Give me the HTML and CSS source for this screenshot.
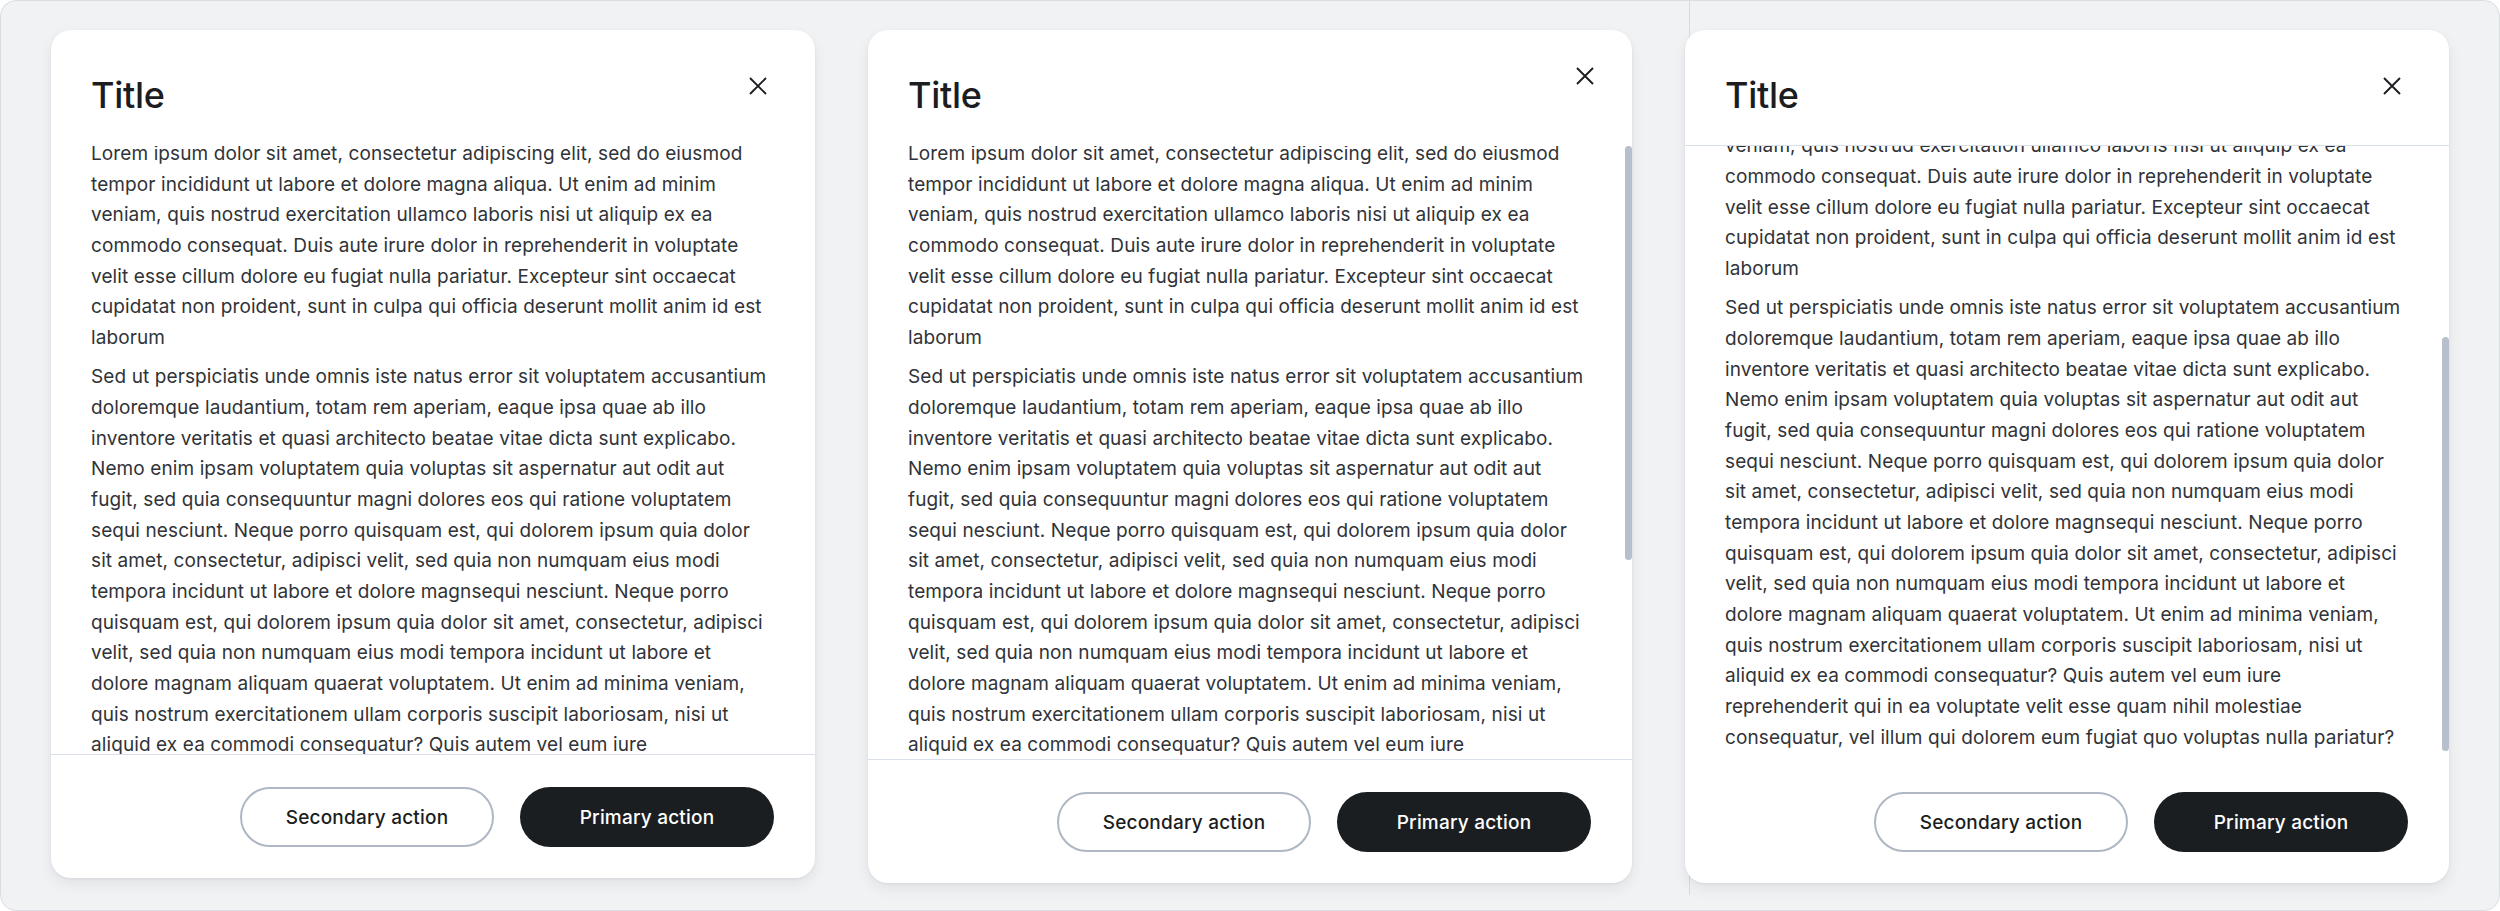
FILE: index.html
```html
<!DOCTYPE html>
<html lang="en">
<head>
<meta charset="utf-8">
<title>Dialogs</title>
<link rel="stylesheet" href="styles.css">
</head>
<body>
<main class="page">

  <div class="col col--first">
    <section class="dialog dialog--short">
      <header class="dialog__header">
        <h2 class="dialog__title">Title</h2>
        <button class="dialog__close" aria-label="Close">
          <svg viewBox="0 0 18 18" width="18" height="18"><path d="M1 1L17 17M17 1L1 17"/></svg>
        </button>
      </header>
      <div class="dialog__body">
        <div class="dialog__content">
          <p>Lorem ipsum dolor sit amet, consectetur adipiscing elit, sed do eiusmod<br>tempor incididunt ut labore et dolore magna aliqua. Ut enim ad minim<br>veniam, quis nostrud exercitation ullamco laboris nisi ut aliquip ex ea<br>commodo consequat. Duis aute irure dolor in reprehenderit in voluptate<br>velit esse cillum dolore eu fugiat nulla pariatur. Excepteur sint occaecat<br>cupidatat non proident, sunt in culpa qui officia deserunt mollit anim id est<br>laborum</p>
          <p>Sed ut perspiciatis unde omnis iste natus error sit voluptatem accusantium<br>doloremque laudantium, totam rem aperiam, eaque ipsa quae ab illo<br>inventore veritatis et quasi architecto beatae vitae dicta sunt explicabo.<br>Nemo enim ipsam voluptatem quia voluptas sit aspernatur aut odit aut<br>fugit, sed quia consequuntur magni dolores eos qui ratione voluptatem<br>sequi nesciunt. Neque porro quisquam est, qui dolorem ipsum quia dolor<br>sit amet, consectetur, adipisci velit, sed quia non numquam eius modi<br>tempora incidunt ut labore et dolore magnsequi nesciunt. Neque porro<br>quisquam est, qui dolorem ipsum quia dolor sit amet, consectetur, adipisci<br>velit, sed quia non numquam eius modi tempora incidunt ut labore et<br>dolore magnam aliquam quaerat voluptatem. Ut enim ad minima veniam,<br>quis nostrum exercitationem ullam corporis suscipit laboriosam, nisi ut<br>aliquid ex ea commodi consequatur? Quis autem vel eum iure<br>reprehenderit qui in ea voluptate velit esse quam nihil molestiae<br>consequatur, vel illum qui dolorem eum fugiat quo voluptas nulla pariatur?</p>
        </div>
      </div>
      <footer class="dialog__footer">
        <button class="btn btn--secondary">Secondary action</button>
        <button class="btn btn--primary">Primary action</button>
      </footer>
    </section>
  </div>

  <div class="col col--second">
    <section class="dialog dialog--top">
      <header class="dialog__header">
        <h2 class="dialog__title">Title</h2>
        <button class="dialog__close dialog__close--corner" aria-label="Close">
          <svg viewBox="0 0 18 18" width="18" height="18"><path d="M1 1L17 17M17 1L1 17"/></svg>
        </button>
      </header>
      <div class="dialog__body">
        <div class="dialog__content">
          <p>Lorem ipsum dolor sit amet, consectetur adipiscing elit, sed do eiusmod<br>tempor incididunt ut labore et dolore magna aliqua. Ut enim ad minim<br>veniam, quis nostrud exercitation ullamco laboris nisi ut aliquip ex ea<br>commodo consequat. Duis aute irure dolor in reprehenderit in voluptate<br>velit esse cillum dolore eu fugiat nulla pariatur. Excepteur sint occaecat<br>cupidatat non proident, sunt in culpa qui officia deserunt mollit anim id est<br>laborum</p>
          <p>Sed ut perspiciatis unde omnis iste natus error sit voluptatem accusantium<br>doloremque laudantium, totam rem aperiam, eaque ipsa quae ab illo<br>inventore veritatis et quasi architecto beatae vitae dicta sunt explicabo.<br>Nemo enim ipsam voluptatem quia voluptas sit aspernatur aut odit aut<br>fugit, sed quia consequuntur magni dolores eos qui ratione voluptatem<br>sequi nesciunt. Neque porro quisquam est, qui dolorem ipsum quia dolor<br>sit amet, consectetur, adipisci velit, sed quia non numquam eius modi<br>tempora incidunt ut labore et dolore magnsequi nesciunt. Neque porro<br>quisquam est, qui dolorem ipsum quia dolor sit amet, consectetur, adipisci<br>velit, sed quia non numquam eius modi tempora incidunt ut labore et<br>dolore magnam aliquam quaerat voluptatem. Ut enim ad minima veniam,<br>quis nostrum exercitationem ullam corporis suscipit laboriosam, nisi ut<br>aliquid ex ea commodi consequatur? Quis autem vel eum iure<br>reprehenderit qui in ea voluptate velit esse quam nihil molestiae<br>consequatur, vel illum qui dolorem eum fugiat quo voluptas nulla pariatur?</p>
        </div>
        <span class="dialog__thumb dialog__thumb--top"></span>
      </div>
      <footer class="dialog__footer">
        <button class="btn btn--secondary">Secondary action</button>
        <button class="btn btn--primary">Primary action</button>
      </footer>
    </section>
  </div>

  <div class="col col--third">
    <section class="dialog dialog--bottom">
      <header class="dialog__header">
        <h2 class="dialog__title">Title</h2>
        <button class="dialog__close" aria-label="Close">
          <svg viewBox="0 0 18 18" width="18" height="18"><path d="M1 1L17 17M17 1L1 17"/></svg>
        </button>
      </header>
      <div class="dialog__body">
        <div class="dialog__content">
          <p>Lorem ipsum dolor sit amet, consectetur adipiscing elit, sed do eiusmod<br>tempor incididunt ut labore et dolore magna aliqua. Ut enim ad minim<br>veniam, quis nostrud exercitation ullamco laboris nisi ut aliquip ex ea<br>commodo consequat. Duis aute irure dolor in reprehenderit in voluptate<br>velit esse cillum dolore eu fugiat nulla pariatur. Excepteur sint occaecat<br>cupidatat non proident, sunt in culpa qui officia deserunt mollit anim id est<br>laborum</p>
          <p>Sed ut perspiciatis unde omnis iste natus error sit voluptatem accusantium<br>doloremque laudantium, totam rem aperiam, eaque ipsa quae ab illo<br>inventore veritatis et quasi architecto beatae vitae dicta sunt explicabo.<br>Nemo enim ipsam voluptatem quia voluptas sit aspernatur aut odit aut<br>fugit, sed quia consequuntur magni dolores eos qui ratione voluptatem<br>sequi nesciunt. Neque porro quisquam est, qui dolorem ipsum quia dolor<br>sit amet, consectetur, adipisci velit, sed quia non numquam eius modi<br>tempora incidunt ut labore et dolore magnsequi nesciunt. Neque porro<br>quisquam est, qui dolorem ipsum quia dolor sit amet, consectetur, adipisci<br>velit, sed quia non numquam eius modi tempora incidunt ut labore et<br>dolore magnam aliquam quaerat voluptatem. Ut enim ad minima veniam,<br>quis nostrum exercitationem ullam corporis suscipit laboriosam, nisi ut<br>aliquid ex ea commodi consequatur? Quis autem vel eum iure<br>reprehenderit qui in ea voluptate velit esse quam nihil molestiae<br>consequatur, vel illum qui dolorem eum fugiat quo voluptas nulla pariatur?</p>
        </div>
        <span class="dialog__thumb dialog__thumb--bottom"></span>
      </div>
      <footer class="dialog__footer">
        <button class="btn btn--secondary">Secondary action</button>
        <button class="btn btn--primary">Primary action</button>
      </footer>
    </section>
  </div>

</main>
</body>
</html>
```

FILE: styles.css
```css
* { box-sizing: border-box; }

html, body {
  margin: 0;
  padding: 0;
  background: #ffffff;
}

body {
  font-family: "Inter", "Liberation Sans", sans-serif;
  color: #1b1d21;
}

.page {
  width: 2500px;
  height: 911px;
  display: flex;
  align-items: flex-start;
  background: #f1f2f4;
  border: 1px solid #dadde2;
  border-radius: 16px;
  overflow: hidden;
}

.col--first { padding: 29px 0 0 50px; }
.col--second { padding: 29px 0 0 53px; }
.col--third {
  margin-left: 57px;
  height: 894px;
  padding-top: 29px;
  border-left: 1px solid #d5dce5;
}
.col--third .dialog { margin-left: -5px; }

.dialog {
  width: 764px;
  background: #ffffff;
  border-radius: 20px;
  box-shadow: 0 6px 14px rgba(20, 28, 40, 0.07), 0 1px 3px rgba(20, 28, 40, 0.06);
  display: flex;
  flex-direction: column;
  overflow: hidden;
}

.dialog__header {
  height: 116px;
  display: flex;
  align-items: flex-start;
  padding: 47px 48px 0 40px;
  border-bottom: 1px solid transparent;
}

.dialog__title {
  flex: 1;
  margin: 0;
  font-size: 36px;
  line-height: 36px;
  font-weight: 500;
  letter-spacing: -0.3px;
  color: #1b1d21;
}

.dialog__close {
  width: 18px;
  height: 18px;
  padding: 0;
  border: 0;
  background: none;
  display: flex;
}
.dialog__close svg {
  fill: none;
  stroke: #1b1d21;
  stroke-width: 1.9;
}
.dialog__close--corner {
  margin-top: -10px;
  margin-right: -10px;
}

.dialog__body {
  position: relative;
  overflow: hidden;
  height: 608px;
}

.dialog__content {
  padding: 0 40px;
  margin-top: -7px;
  font-size: 19px;
  line-height: 30.67px;
  letter-spacing: 0.1px;
  color: #303338;
  white-space: nowrap;
}
.dialog__content p { margin: 0 0 8.67px; }

.dialog__thumb {
  position: absolute;
  right: 0;
  width: 7px;
  height: 414px;
  border-radius: 4px;
  background: #b6bfcb;
}
.dialog__thumb--top { top: 0; }
.dialog__thumb--bottom { top: 191px; }

.dialog__footer {
  display: flex;
  justify-content: flex-end;
  gap: 26px;
  padding: 32px 41px 31px;
  border-top: 1px solid #d9e0e9;
}

.dialog--top .dialog__body,
.dialog--bottom .dialog__body { height: 613px; }

.dialog--bottom .dialog__header { border-bottom-color: #d9e0e9; }
.dialog--bottom .dialog__content { margin-top: -76px; }
.dialog--bottom .dialog__footer { border-top-color: transparent; }

.btn {
  width: 254px;
  height: 60px;
  border-radius: 30px;
  font-family: "Inter", "Liberation Sans", sans-serif;
  font-size: 19px;
  font-weight: 500;
  letter-spacing: 0.2px;
  cursor: pointer;
}
.btn--secondary {
  background: #ffffff;
  color: #1b1d21;
  border: 2px solid #aeb7c3;
}
.btn--primary {
  background: #1b1e21;
  color: #ffffff;
  border: 0;
}
```
